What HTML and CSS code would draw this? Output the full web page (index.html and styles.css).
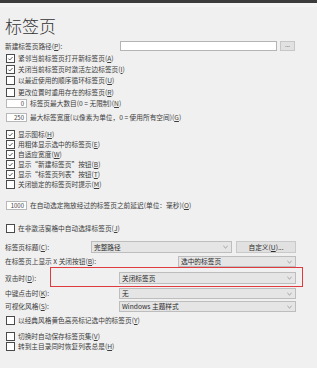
FILE: index.html
```html
<!DOCTYPE html>
<html lang="zh-CN">
<head>
<meta charset="utf-8">
<link rel="stylesheet" href="styles.css">
</head>
<body>
<div class="topbar"></div>
<main class="page">
  <h1 class="title">标签页</h1>

  <div class="row h12">
    <span>新建标签页路径(<u>P</u>):</span>
    <span class="path-input"></span>
    <span class="dots-btn">...</span>
  </div>

  <div class="row h12"><span class="cb on"><svg viewBox="0 0 8 8"><path d="M1.6 4.1 L3.2 5.7 L6.4 2.3"/></svg></span><span>紧邻当前标签页打开新标签页(<u>A</u>)</span></div>
  <div class="row h11"><span class="cb on"><svg viewBox="0 0 8 8"><path d="M1.6 4.1 L3.2 5.7 L6.4 2.3"/></svg></span><span>关闭当前标签页时激活左边标签页(<u>I</u>)</span></div>
  <div class="row h11"><span class="cb"></span><span>以最近使用的顺序循环标签页(<u>U</u>)</span></div>
  <div class="row h12"><span class="cb"></span><span>更改位置时重用存在的标签页(<u>R</u>)</span></div>

  <div class="row h11"><span class="num">0</span><span>标签页最大数目(0 = 无限制)(<u>N</u>)</span></div>
  <div class="row h11 mt3"><span class="num">250</span><span>最大标签宽度(以像素为单位，0 = 使用所有空间)(<u>G</u>)</span></div>

  <div class="row h10 mt6"><span class="cb on"><svg viewBox="0 0 8 8"><path d="M1.6 4.1 L3.2 5.7 L6.4 2.3"/></svg></span><span>显示图标(<u>H</u>)</span></div>
  <div class="row h10"><span class="cb on"><svg viewBox="0 0 8 8"><path d="M1.6 4.1 L3.2 5.7 L6.4 2.3"/></svg></span><span>用粗体显示选中的标签页(<u>E</u>)</span></div>
  <div class="row h10"><span class="cb on"><svg viewBox="0 0 8 8"><path d="M1.6 4.1 L3.2 5.7 L6.4 2.3"/></svg></span><span>自适应宽度(<u>W</u>)</span></div>
  <div class="row h10"><span class="cb on"><svg viewBox="0 0 8 8"><path d="M1.6 4.1 L3.2 5.7 L6.4 2.3"/></svg></span><span>显示“新建标签页”按钮(<u>B</u>)</span></div>
  <div class="row h10"><span class="cb on"><svg viewBox="0 0 8 8"><path d="M1.6 4.1 L3.2 5.7 L6.4 2.3"/></svg></span><span>显示“标签页列表”按钮(<u>T</u>)</span></div>
  <div class="row h10"><span class="cb"></span><span>关闭锁定的标签页时提示(<u>M</u>)</span></div>

  <div class="row h10 mt11"><span class="num">1000</span><span>在自动选定拖放经过的标签页之前延迟(单位：毫秒)(<u>O</u>)</span></div>

  <div class="row h10 mt13"><span class="cb"></span><span>在非激活窗格中自动选择标签页(<u>J</u>)</span></div>

  <div class="row h12 mt8">
    <span>标签页标题(<u>C</u>):</span>
    <span class="select w141"><span>完整路径</span><svg class="chev" viewBox="0 0 6 4"><path d="M0.5 0.8 L3 3.2 L5.5 0.8"/></svg></span>
    <span class="btn">自定义(<u>U</u>)...</span>
  </div>
  <div class="row h11 mt3">
    <span>在标签页上显示 X 关闭按钮(<u>B</u>):</span>
    <span class="select w118"><span>选中的标签页</span><svg class="chev" viewBox="0 0 6 4"><path d="M0.5 0.8 L3 3.2 L5.5 0.8"/></svg></span>
  </div>
  <div class="row h12 mt5">
    <span>双击时(<u>D</u>):</span>
    <span class="select w177"><span>关闭标签页</span><svg class="chev" viewBox="0 0 6 4"><path d="M0.5 0.8 L3 3.2 L5.5 0.8"/></svg></span>
    <span class="highlight"></span>
  </div>
  <div class="row h11 mt4">
    <span>中键点击时(<u>K</u>):</span>
    <span class="select w177"><span>无</span><svg class="chev" viewBox="0 0 6 4"><path d="M0.5 0.8 L3 3.2 L5.5 0.8"/></svg></span>
  </div>
  <div class="row h11 mt2">
    <span>可视化风格(<u>S</u>):</span>
    <span class="select w177"><span>Windows 主题样式</span><svg class="chev" viewBox="0 0 6 4"><path d="M0.5 0.8 L3 3.2 L5.5 0.8"/></svg></span>
  </div>

  <div class="row h10 mt3"><span class="cb"></span><span>以经典风格黄色高亮标记选中的标签页(<u>Y</u>)</span></div>
  <div class="row h10 mt6"><span class="cb"></span><span>切换时自动保存标签页集(<u>V</u>)</span></div>
  <div class="row h10"><span class="cb"></span><span>转到主目录同时恢复列表总是(<u>H</u>)</span></div>
</main>
</body>
</html>
```

FILE: styles.css
```css
html, body {
  margin: 0;
  padding: 0;
  background: #f0f0f0;
}

body {
  width: 317px;
  height: 368px;
  overflow: hidden;
  font-family: "Noto Sans CJK SC", "Noto Sans", sans-serif;
  font-size: 6.7px;
  color: #3c3c3c;
}

.topbar {
  height: 3px;
  background: #3b3b3b;
  border-bottom: 4px solid #f4f4f4;
}

.page {
  width: 291px;
  padding: 0 0 0 5px;
}

.title {
  margin: 0;
  padding-top: 7px;
  line-height: 24px;
  font-size: 17px;
  font-weight: 300;
  color: #333;
  box-sizing: border-box;
  height: 33px;
}

.row {
  display: flex;
  align-items: center;
  white-space: nowrap;
  position: relative;
  line-height: 1;
}

.h10 { height: 10px; }
.h11 { height: 11px; }
.h12 { height: 12px; }

.mt2 { margin-top: 2px; }
.mt3 { margin-top: 3px; }
.mt4 { margin-top: 4px; }
.mt5 { margin-top: 5px; }
.mt6 { margin-top: 6px; }
.mt8 { margin-top: 8px; }
.mt11 { margin-top: 11px; }
.mt13 { margin-top: 13px; }

u {
  text-decoration: underline;
  text-decoration-thickness: 0.5px;
}

.path-input {
  margin-left: auto;
  width: 157px;
  height: 10px;
  box-sizing: border-box;
  background: #fff;
  border: 1px solid #b4b4b4;
}

.dots-btn {
  width: 15px;
  height: 10px;
  margin-left: 3px;
  margin-right: 1px;
  box-sizing: border-box;
  background: #e1e1e1;
  border: 1px solid #c6c6c6;
  font-size: 6px;
  line-height: 5px;
  text-align: center;
  color: #444;
}

.cb {
  flex: none;
  width: 7px;
  height: 7px;
  margin-left: 1px;
  margin-right: 3px;
  border: 1px solid #4a4a4a;
  background: #fff;
  box-sizing: content-box;
  display: flex;
}

.cb svg {
  width: 7px;
  height: 7px;
  fill: none;
  stroke: #333;
  stroke-width: 0.9;
}

.num {
  flex: none;
  width: 21px;
  height: 9px;
  box-sizing: border-box;
  margin-right: 3px;
  margin-left: 1px;
  background: #fff;
  border: 1px solid #b8b8b8;
  text-align: right;
  padding-right: 2px;
  font-size: 6px;
  line-height: 7px;
  color: #444;
}

.select {
  margin-left: auto;
  height: 100%;
  box-sizing: border-box;
  display: flex;
  align-items: center;
  justify-content: space-between;
  padding: 0 3px 0 2px;
  background: #e5e5e5;
  border: 1px solid #bdbdbd;
  color: #2a2a2a;
}

.w141 { width: 141px; }
.w118 { width: 118px; }
.w177 { width: 177px; }

.chev {
  width: 5px;
  height: 4px;
  fill: none;
  stroke: #7a7a7a;
  stroke-width: 0.8;
}

.btn {
  width: 60px;
  height: 100%;
  margin-left: 4px;
  box-sizing: border-box;
  background: #e1e1e1;
  border: 1px solid #c9c9c9;
  display: flex;
  align-items: center;
  justify-content: center;
  color: #2a2a2a;
}

.highlight {
  position: absolute;
  left: 45px;
  top: -5px;
  width: 253px;
  height: 20px;
  box-sizing: border-box;
  border: 1.5px solid #df3b3e;
  pointer-events: none;
}
```
